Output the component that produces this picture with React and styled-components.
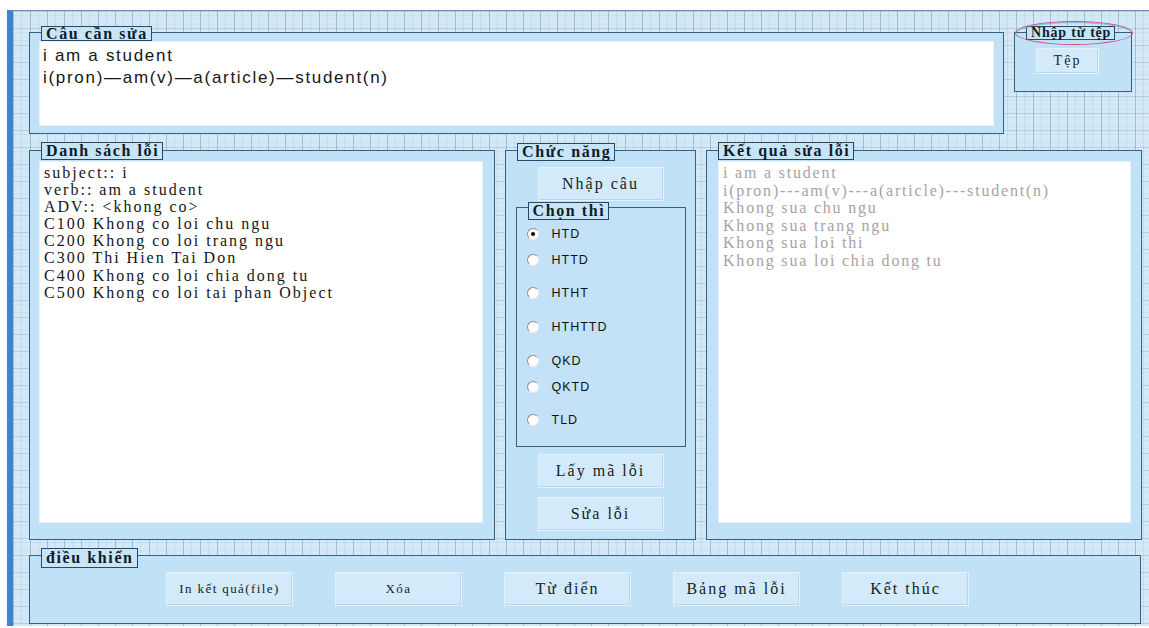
import React from 'react';
import styled, { createGlobalStyle } from 'styled-components';

const GlobalStyle = createGlobalStyle`
  body {
    margin: 0;
    background: #ffffff;
    font-family: "Liberation Serif", "Times New Roman", serif;
  }
`;

// design-time form surface with its grid
const Window = styled.div`
  box-sizing: border-box;
  height: 616px;
  margin: 10px 0 0 7px;
  padding: 21px 8px 0 16px;
  border-left: 6px solid #3d83d0;
  border-top: 1px solid #6b8fad;
  background-color: #d3e9f8;
  background-image:
    linear-gradient(90deg, rgba(58, 104, 142, 0.32) 1px, transparent 1px),
    linear-gradient(rgba(58, 104, 142, 0.2) 1px, transparent 1px),
    linear-gradient(90deg, rgba(58, 104, 142, 0.1) 1px, transparent 1px),
    linear-gradient(rgba(58, 104, 142, 0.07) 1px, transparent 1px);
  background-size: 17px 17px, 17px 17px, 17px 17px, 17px 8.5px;
  background-position: 0 0, 0 0, 8px 0, 0 4px;
`;

const Row = styled.div`
  display: flex;
  align-items: flex-start;
  gap: 10px;
  margin-top: ${(p) => p.$top || 0}px;
`;

const Group = styled.div`
  position: relative;
  box-sizing: border-box;
  flex: 0 0 auto;
  width: ${(p) => p.$w}px;
  height: ${(p) => p.$h}px;
  padding: ${(p) => p.$pad || '0'};
  border: 1px solid #35607f;
  background: #c1e1f7;
  display: flex;
  flex-direction: column;
  align-items: ${(p) => p.$align || 'stretch'};
`;

const Legend = styled.span`
  position: absolute;
  top: ${(p) => p.$top ?? -9}px;
  left: 11px;
  padding: 0 3px 0 4px;
  border: 1px solid #26496a;
  background: #c8e5f8;
  color: #0f1c2a;
  font-size: ${(p) => p.$size || 16}px;
  font-weight: bold;
  line-height: ${(p) => p.$lh || 16}px;
  letter-spacing: ${(p) => p.$ls || 1.6}px;
  white-space: nowrap;
`;

const Ring = styled.span`
  position: absolute;
  left: 0;
  top: -12px;
  width: 116px;
  height: 22px;
  border: 1.5px solid #d4507c;
  border-radius: 50%;
  box-shadow: inset 0 2px 0 -1px rgba(90, 170, 200, 0.6);
  pointer-events: none;
`;

const WhiteBox = styled.div`
  flex: 1;
  box-sizing: border-box;
  background: #ffffff;
  border: 1px solid #e6f3fc;
  padding: ${(p) => p.$pad || '2px 4px'};
  color: ${(p) => p.$color || '#161616'};
  font-family: ${(p) => (p.$sans ? '"Liberation Sans", Arial, sans-serif' : '"Liberation Serif", "Times New Roman", serif')};
  font-size: ${(p) => p.$size || 16}px;
  line-height: ${(p) => p.$lh || 17}px;
  letter-spacing: ${(p) => p.$ls || 2}px;
  white-space: nowrap;
`;

const Button = styled.button`
  box-sizing: border-box;
  flex: 0 0 auto;
  width: ${(p) => p.$w || 126}px;
  height: ${(p) => p.$h || 34}px;
  margin-top: ${(p) => p.$top || 0}px;
  margin-left: ${(p) => p.$left || 0}px;
  padding: 0;
  background: #d3eafa;
  border: 1px solid #e4f2fc;
  box-shadow: inset -1px -1px 0 #b7d6ec;
  color: #151d27;
  font-family: "Liberation Serif", "Times New Roman", serif;
  font-size: ${(p) => p.$size || 16}px;
  letter-spacing: ${(p) => p.$ls || 2}px;
`;

const TenseBox = styled.div`
  position: relative;
  box-sizing: border-box;
  width: 170px;
  height: 240px;
  margin-top: 6px;
  padding: 0 0 0 10px;
  border: 1px solid #35607f;
  background: #c4e2f7;
`;

const RadioRow = styled.label`
  display: flex;
  align-items: center;
  gap: 13px;
  height: 16px;
  margin-top: ${(p) => p.$space}px;
  color: #111111;
  font-family: "Liberation Sans", Arial, sans-serif;
  font-size: 12.5px;
  letter-spacing: 1px;
`;

const RadioDot = styled.span`
  position: relative;
  box-sizing: border-box;
  width: 12px;
  height: 12px;
  border-radius: 50%;
  background: #ffffff;
  border: 1px solid;
  border-color: #8c8c8c #eeeeee #eeeeee #8c8c8c;

  &::after {
    content: '';
    display: ${(p) => (p.$on ? 'block' : 'none')};
    position: absolute;
    left: 3px;
    top: 3px;
    width: 4px;
    height: 4px;
    border-radius: 50%;
    background: #000000;
  }
`;

const ButtonBar = styled.div`
  display: flex;
  gap: 42px;
  padding: 16px 0 0 136px;
`;

const sentence = ['i am a student', 'i(pron)—am(v)—a(article)—student(n)'];

const errors = [
  'subject:: i',
  'verb:: am a student',
  'ADV:: <khong co>',
  'C100 Khong co loi chu ngu',
  'C200 Khong co loi trang ngu',
  'C300 Thi Hien Tai Don',
  'C400 Khong co loi chia dong tu',
  'C500 Khong co loi tai phan Object',
];

const results = [
  'i am a student',
  'i(pron)---am(v)---a(article)---student(n)',
  'Khong sua chu ngu',
  'Khong sua trang ngu',
  'Khong sua loi thi',
  'Khong sua loi chia dong tu',
];

const tenses = [
  { name: 'HTD', space: 18, on: true },
  { name: 'HTTD', space: 10 },
  { name: 'HTHT', space: 17 },
  { name: 'HTHTTD', space: 18 },
  { name: 'QKD', space: 18 },
  { name: 'QKTD', space: 10 },
  { name: 'TLD', space: 17 },
];

const controls = [
  { label: 'In kết quả(file)', size: 13, ls: 1.4 },
  { label: 'Xóa', size: 13, ls: 1.4 },
  { label: 'Từ điển' },
  { label: 'Bảng mã lỗi' },
  { label: 'Kết thúc' },
];

const Lines = ({ items }) => items.map((t) => <div key={t}>{t}</div>);

export default function App() {
  return (
    <>
      <GlobalStyle />
      <Window>
        <Row>
          <Group $w={975} $h={102} $pad="8px 9px 7px 9px">
            <Legend $top={-7} $lh={13}>Câu cần sửa</Legend>
            <WhiteBox $sans $size={17} $lh={22} $ls={1.7} $pad="3px 3px">
              <Lines items={sentence} />
            </WhiteBox>
          </Group>
          <Group $w={118} $h={60} $pad="15px 0 0 0">
            <Legend $top={-7} $size={14} $lh={12} $ls={0.8}>Nhập từ tệp</Legend>
            <Ring />
            <Button $w={63} $h={26} $left={21} $size={14}>Tệp</Button>
          </Group>
        </Row>

        <Row $top={16}>
          <Group $w={466} $h={390} $pad="10px 11px 16px 9px">
            <Legend>Danh sách lỗi</Legend>
            <WhiteBox $pad="2px 4px" $lh={17.1}>
              <Lines items={errors} />
            </WhiteBox>
          </Group>

          <Group $w={191} $h={390} $pad="16px 0 0 0" $align="center">
            <Legend $top={-8}>Chức năng</Legend>
            <Button>Nhập câu</Button>
            <TenseBox>
              <Legend $top={-6}>Chọn thì</Legend>
              {tenses.map((t) => (
                <RadioRow key={t.name} $space={t.space}>
                  <RadioDot $on={t.on} />
                  {t.name}
                </RadioRow>
              ))}
            </TenseBox>
            <Button $top={7}>Lấy mã lỗi</Button>
            <Button $top={9}>Sửa lỗi</Button>
          </Group>

          <Group $w={436} $h={390} $pad="10px 10px 16px 11px">
            <Legend>Kết quả sửa lỗi</Legend>
            <WhiteBox $color="#aaa1a1" $lh={17.6} $ls={1.8} $pad="2px 4px">
              <Lines items={results} />
            </WhiteBox>
          </Group>
        </Row>

        <Row $top={15}>
          <Group $w={1112} $h={69}>
            <Legend $top={-8} $lh={18}>điều khiển</Legend>
            <ButtonBar>
              {controls.map((c) => (
                <Button key={c.label} $w={127} $size={c.size} $ls={c.ls}>
                  {c.label}
                </Button>
              ))}
            </ButtonBar>
          </Group>
        </Row>
      </Window>
    </>
  );
}
